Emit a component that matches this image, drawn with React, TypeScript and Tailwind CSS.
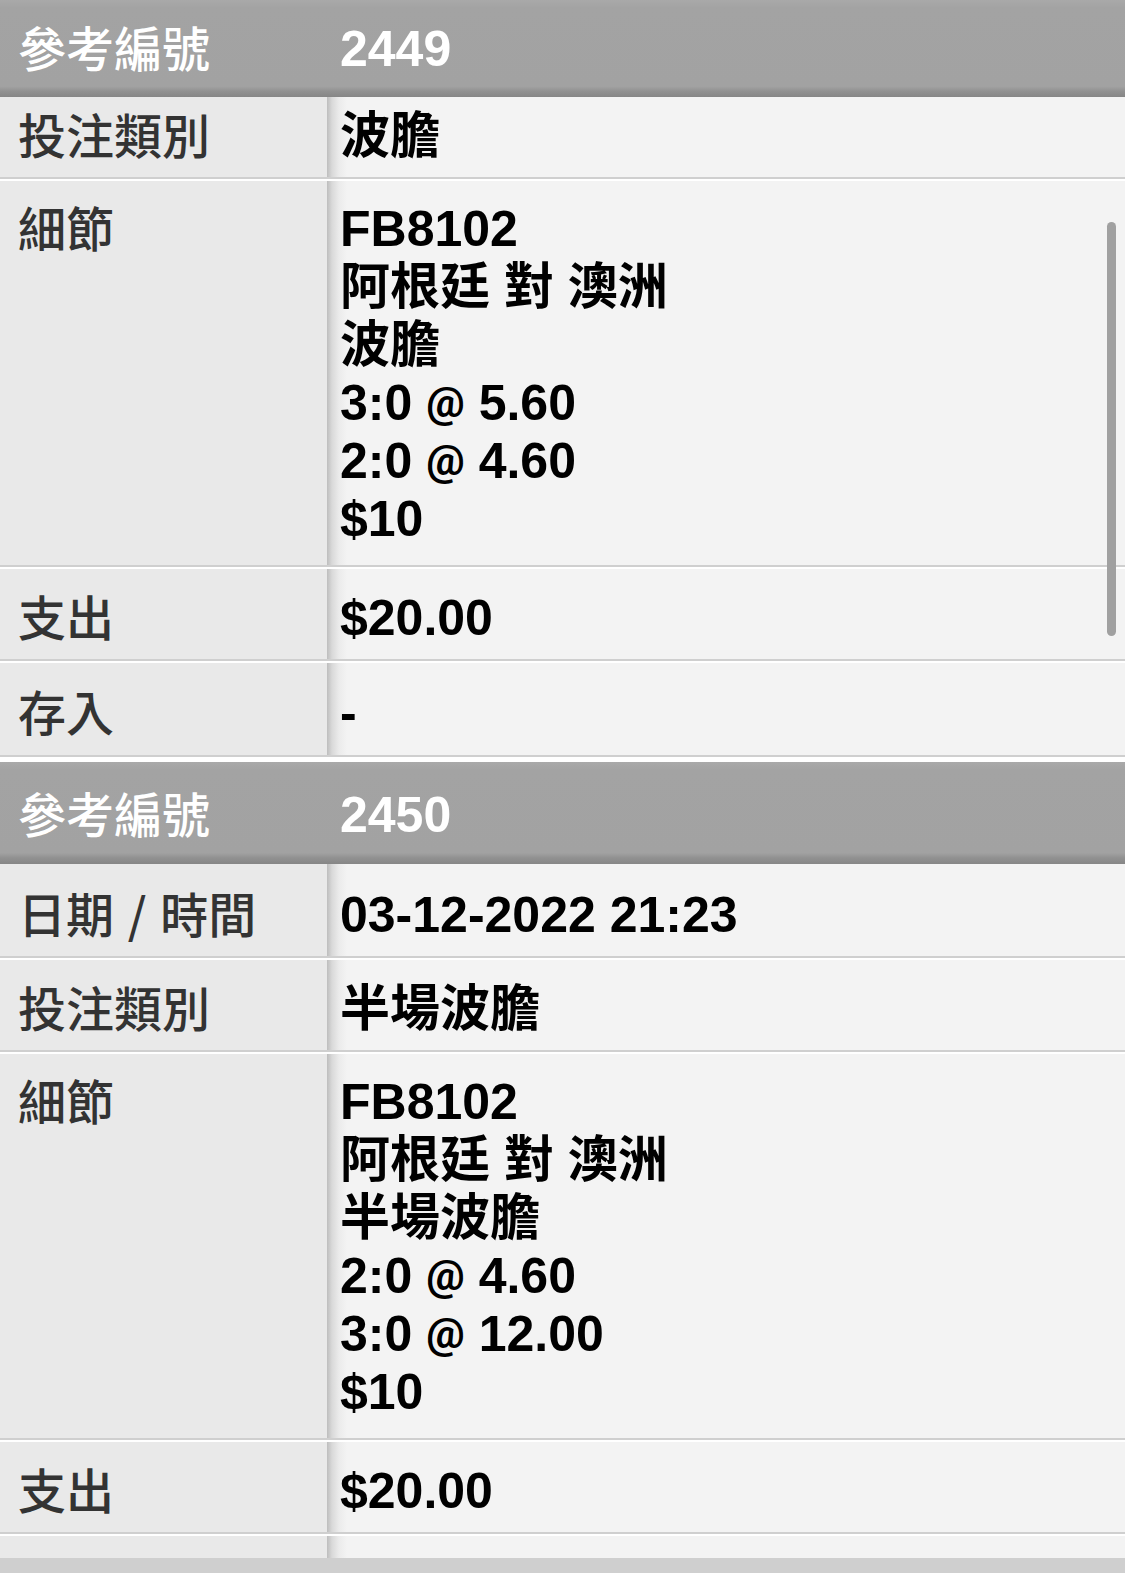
import React from "react";

const LABEL_FONT = "font-['Noto_Sans_CJK_TC','Noto_Sans_CJK_SC',sans-serif]";
const VALUE_FONT = "font-['Liberation_Sans','Noto_Sans_CJK_TC',sans-serif]";
const SHADOW =
  "bg-[linear-gradient(to_right,#bdbdbd_0px,#d9d9d9_5px,#ebebeb_12px,#f3f3f3_20px)]";

function Header({ id, first }: { id: string; first?: boolean }) {
  return (
    <div
      className={
        (first ? "h-[97px] " : "h-[102px] pt-[3px] ") +
        "flex items-center bg-[linear-gradient(to_bottom,#a9a9a9_0%,#a3a3a3_8%,#a2a2a2_89%,#919191_94%,#868686_100%)] text-white shrink-0"
      }
    >
      <div className={`w-[327px] shrink-0 pl-[18px] text-[48px] leading-[58px] font-medium ${LABEL_FONT}`}>
        <span className="relative top-[-3px]">參考編號</span>
      </div>
      <div className={`pl-[13px] text-[50px] leading-[58px] font-bold ${VALUE_FONT}`}>{id}</div>
    </div>
  );
}

function renderLine(l: string) {
  const parts = l.split("@");
  if (parts.length === 1) return l;
  return (
    <>
      {parts[0]}
      <span className="relative top-[-3px] font-['Roboto',sans-serif] text-[43px] leading-none font-bold">@</span>
      {parts[1]}
    </>
  );
}

function renderLabel(label: string) {
  if (label.includes(" / ")) {
    const [a, b] = label.split(" / ");
    return (
      <>
        {a}
        <span className="px-[3px]"> / </span>
        {b}
      </>
    );
  }
  return label;
}

function Row({
  label,
  lines,
  pad,
}: {
  label: string;
  lines: string[];
  pad: string;
}) {
  return (
    <div className="flex shrink-0 border-b-2 border-white">
      <div
        className={`w-[327px] shrink-0 bg-[#e9e9e9] border-b-2 border-[#cfcfcf] pl-[18px] ${pad} text-[48px] leading-[58px] font-medium text-[#333333] ${LABEL_FONT}`}
      >
        <span className="relative top-[-3px] whitespace-pre">{renderLabel(label)}</span>
      </div>
      <div
        className={`flex-1 bg-[#f3f3f3] ${SHADOW} border-b-2 border-[#cfcfcf] pl-[13px] ${pad} text-[50px] leading-[58px] font-bold text-black ${VALUE_FONT}`}
      >
        {lines.map((l, i) => (
          <div key={i} className="h-[58px] whitespace-pre">
            {renderLine(l)}
          </div>
        ))}
      </div>
    </div>
  );
}

export default function App() {
  return (
    <div className="relative flex h-[1573px] w-full flex-col overflow-hidden bg-[#f3f3f3]">
      <Header id="2449" first />
      <Row label="投注類別" lines={["波膽"]} pad="pt-[10px] pb-[12px]" />
      <Row
        label="細節"
        lines={["FB8102", "阿根廷 對 澳洲", "波膽", "3:0 @ 5.60", "2:0 @ 4.60", "$10"]}
        pad="pt-[19px] pb-[17px]"
      />
      <Row label="支出" lines={["$20.00"]} pad="pt-[20px] pb-[12px]" />
      <Row label="存入" lines={["-"]} pad="pt-[21px] pb-[13px]" />
      <div className="h-[3px] shrink-0 bg-white" />
      <Header id="2450" />
      <Row label="日期 / 時間" lines={["03-12-2022 21:23"]} pad="pt-[22px] pb-[12px]" />
      <Row label="投注類別" lines={["半場波膽"]} pad="pt-[20px] pb-[12px]" />
      <Row
        label="細節"
        lines={["FB8102", "阿根廷 對 澳洲", "半場波膽", "2:0 @ 4.60", "3:0 @ 12.00", "$10"]}
        pad="pt-[19px] pb-[17px]"
      />
      <Row label="支出" lines={["$20.00"]} pad="pt-[20px] pb-[12px]" />
      <div className="flex h-[22px] shrink-0">
        <div className="w-[327px] shrink-0 bg-[#e9e9e9]" />
        <div className={`flex-1 ${SHADOW}`} />
      </div>
      <div className="flex-1 bg-[#cfcfcf]" />
      <div className="absolute right-[9px] top-[222px] h-[414px] w-[9px] rounded-full bg-[#a0a0a0]" />
    </div>
  );
}
